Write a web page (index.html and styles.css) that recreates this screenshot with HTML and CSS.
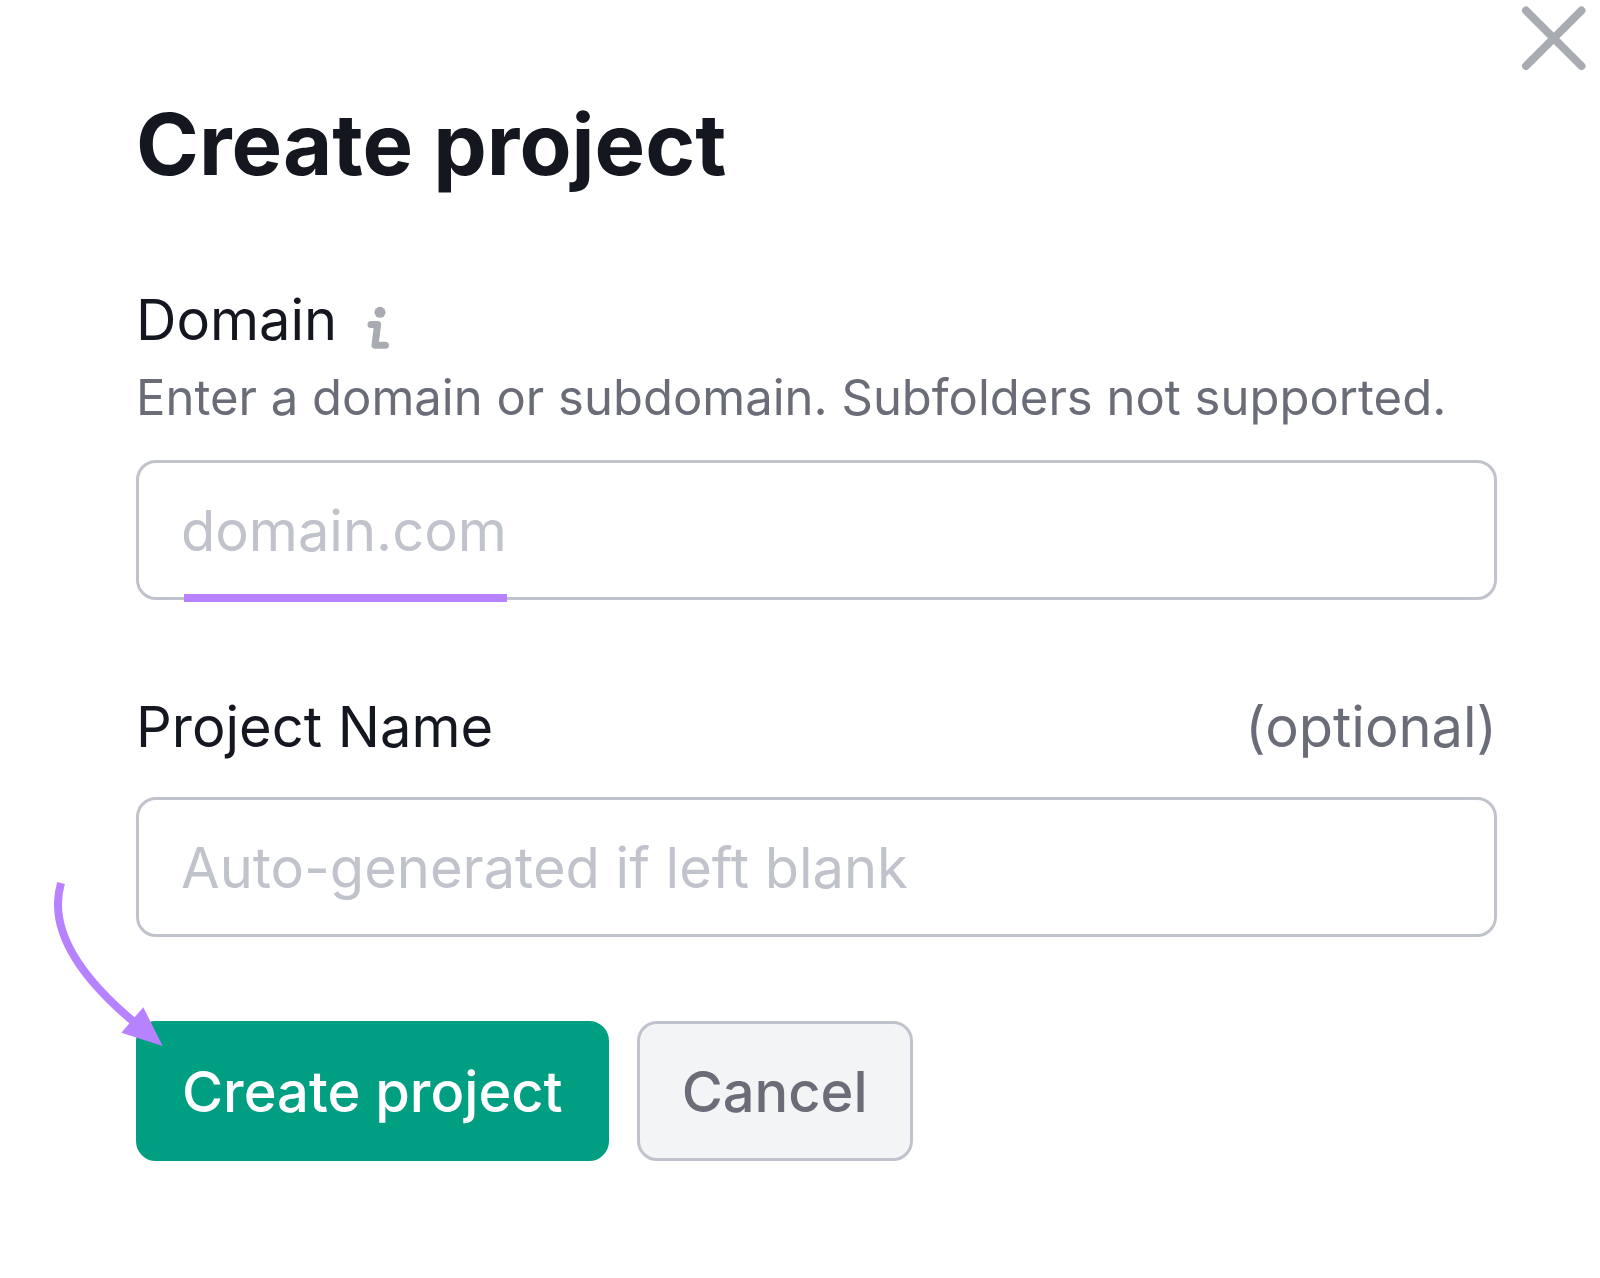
FILE: index.html
```html
<!DOCTYPE html>
<html lang="en">
<head>
  <meta charset="utf-8">
  <meta name="viewport" content="width=device-width, initial-scale=1">
  <title>Create project</title>
  <link rel="stylesheet" href="styles.css">
</head>
<body>
  <main class="dialog">
    <button class="close" type="button" aria-label="Close">
      <svg class="close-icon" viewBox="0 0 64 64" aria-hidden="true">
        <path d="M4 4.500L59.500 60M59.500 4.500L4 60"/>
      </svg>
    </button>
    <h1 class="title">Create project</h1>
    <form class="form">
      <div class="field">
        <div class="label-row">
          <label class="label" for="domain">Domain</label>
          <svg class="info-icon" viewBox="0 0 22 42" aria-hidden="true">
            <circle cx="13" cy="5.300" r="5.500"/>
            <path d="M4 17.500H10.600L8 38.300H18.400"/>
          </svg>
        </div>
        <p class="hint" id="domain-hint">Enter a domain or subdomain. Subfolders not supported.</p>
        <div class="control">
          <input class="input" id="domain" type="text" placeholder="domain.com" aria-describedby="domain-hint">
          <span class="underline"></span>
        </div>
      </div>
      <div class="field">
        <div class="label-row label-row-split">
          <label class="label" for="name">Project Name</label>
          <span class="optional">(optional)</span>
        </div>
        <input class="input" id="name" type="text" placeholder="Auto-generated if left blank">
      </div>
      <div class="actions">
        <button class="button button-primary" type="submit">Create project</button>
        <button class="button button-secondary" type="button">Cancel</button>
        <svg class="arrow" viewBox="0 0 112 170" aria-hidden="true">
          <path class="arrow-line" d="M7 3C-2 34 6 80 80 142"/>
          <path class="arrow-head" d="M89.300 127.300L108.700 166L67.300 152.700Z"/>
        </svg>
      </div>
    </form>
  </main>
</body>
</html>
```
FILE: styles.css
```css
* {
  box-sizing: border-box;
}

body {
  margin: 0;
  background: #fff;
  color: #14171f;
  font-family: Inter, "Liberation Sans", sans-serif;
}

.dialog {
  position: relative;
  padding: 93px 103px 116px 136px;
}

.close {
  position: absolute;
  top: 6px;
  right: 14px;
  width: 64px;
  height: 64px;
  padding: 0;
  border: 0;
  background: none;
}

.close-icon {
  display: block;
  width: 64px;
  height: 64px;
  overflow: visible;
  fill: none;
  stroke: #a9abb2;
  stroke-width: 8;
  stroke-linecap: round;
}

.title {
  margin: 0 0 87px;
  font-size: 85px;
  font-weight: 700;
  line-height: 104px;
}

.form {
  display: flex;
  flex-direction: column;
}

.field {
  margin-bottom: 84px;
}

.field:first-child {
  margin-bottom: 91px;
}

.label-row {
  display: flex;
  align-items: center;
  gap: 30px;
  margin-bottom: 4px;
}

.label-row-split {
  justify-content: space-between;
  margin-bottom: 34px;
}

.label,
.optional {
  font-size: 56px;
  line-height: 72px;
}

.optional,
.hint {
  color: #6a6d78;
}

.info-icon {
  width: 22px;
  height: 42px;
  margin-top: 16px;
  overflow: visible;
  fill: #a9abb2;
}

.info-icon path {
  fill: none;
  stroke: #a9abb2;
  stroke-width: 7;
  stroke-linecap: round;
  stroke-linejoin: round;
}

.hint {
  margin: 0 0 24px;
  font-size: 49px;
  line-height: 76px;
}

.control {
  position: relative;
}

.input {
  display: block;
  width: 100%;
  height: 140px;
  padding: 2px 42px 0;
  border: 3px solid #c0c3cb;
  border-radius: 20px;
  background: #fff;
  color: inherit;
  font: inherit;
  font-size: 56px;
}

.input::placeholder {
  color: #c0c3cb;
  opacity: 1;
}

.underline {
  position: absolute;
  bottom: -2px;
  left: 48px;
  width: 323px;
  height: 8px;
  background: #b782ff;
}

.actions {
  position: relative;
  display: flex;
  gap: 28px;
}

.button {
  height: 140px;
  padding: 2px 43px 0;
  border: 3px solid #c0c3cb;
  border-radius: 20px;
  font: inherit;
  font-size: 56px;
  font-weight: 500;
}

.button-primary {
  border-color: #009f81;
  background: #009f81;
  color: #fff;
}

.button-secondary {
  padding: 2px 42px 0;
  background: #f3f4f6;
  color: #6a6d78;
}

.arrow {
  position: absolute;
  top: -141px;
  left: -82px;
  width: 112px;
  height: 170px;
  pointer-events: none;
}

.arrow-line {
  fill: none;
  stroke: #b782ff;
  stroke-width: 8;
}

.arrow-head {
  fill: #b782ff;
}
```
